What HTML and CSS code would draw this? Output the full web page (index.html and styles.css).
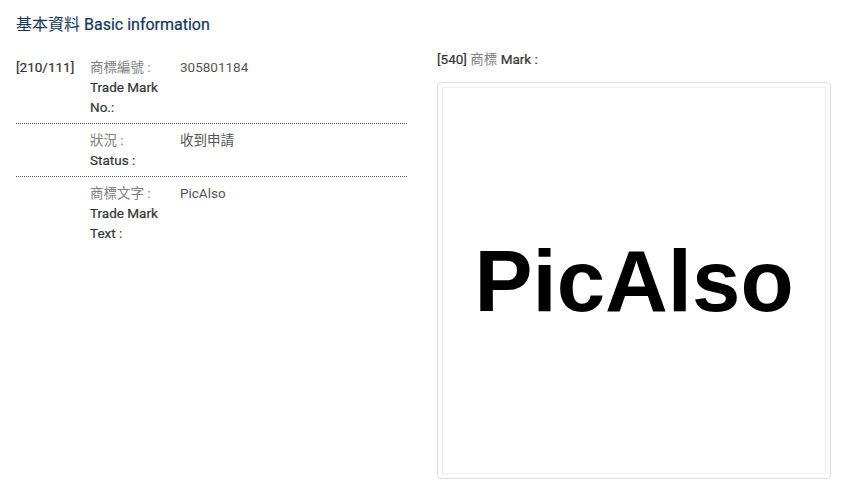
FILE: index.html
```html
<!DOCTYPE html>
<html lang="zh-Hant">
<head>
  <meta charset="UTF-8">
  <title>基本資料 Basic information</title>
  <link rel="stylesheet" href="styles.css">
</head>
<body>

  <div class="page">
    <h3 class="title"><span class="title-zh">基本資料</span> Basic information</h3>

    <div class="cols">
      <div class="info">
        <div class="row">
          <div class="code">[210/111]</div>
          <div class="label">
            <span class="zh">商標編號 :</span>
            <span class="en">Trade Mark No.:</span>
          </div>
          <div class="value">305801184</div>
        </div>

        <div class="row">
          <div class="code"></div>
          <div class="label">
            <span class="zh">狀況 :</span>
            <span class="en">Status :</span>
          </div>
          <div class="value">收到申請</div>
        </div>

        <div class="row">
          <div class="code"></div>
          <div class="label">
            <span class="zh">商標文字 :</span>
            <span class="en">Trade Mark Text :</span>
          </div>
          <div class="value">PicAlso</div>
        </div>
      </div>

      <div class="mark">
        <div class="mark-title">[540] <span class="mark-zh">商標</span> Mark :</div>
        <div class="thumb">
          <div class="thumb-img">PicAlso</div>
        </div>
      </div>
    </div>
  </div>

</body>
</html>
```

FILE: styles.css
```css
body {
  margin: 0;
  background: #fff;
  font-family: Roboto, "Noto Sans CJK TC", sans-serif;
  font-size: 13.5px;
  color: #333;
}
.page {
  padding: 14px 18px 0 16px;
}
.title {
  margin: 0 0 20px;
  font-size: 16px;
  font-weight: 400;
  line-height: 22px;
  color: #12365a;
  -webkit-text-stroke: 0.2px #12365a;
}
.title-zh {
  -webkit-text-stroke: 0;
}
.cols {
  display: grid;
  grid-template-columns: 391px 394px;
  gap: 30px;
}
.row {
  display: flex;
  padding: 6px 0 6px;
  line-height: 20px;
  border-bottom: 1px dotted #555;
}
.row:first-child {
  padding-top: 1px;
}
.row:last-child {
  border-bottom: none;
}
.code {
  width: 74px;
  flex-shrink: 0;
  -webkit-text-stroke: 0.2px #333;
}
.label {
  width: 80px;
  padding-right: 10px;
  flex-shrink: 0;
}
.zh {
  display: block;
  color: #808080;
}
.en {
  color: #333;
  -webkit-text-stroke: 0.2px #333;
}
.value {
  color: #555;
}
.mark-title {
  line-height: 20px;
  margin-top: -7px;
  margin-bottom: 13px;
  -webkit-text-stroke: 0.2px #333;
}
.mark-zh {
  color: #808080;
  -webkit-text-stroke: 0;
}
.thumb {
  border: 1px solid #ddd;
  border-radius: 4px;
  padding: 4px;
}
.thumb-img {
  height: 385px;
  border: 1px solid #eee;
  display: flex;
  align-items: center;
  justify-content: center;
  font-family: "Liberation Sans", Arial, sans-serif;
  font-weight: 700;
  font-size: 87px;
  color: #000;
}
```
